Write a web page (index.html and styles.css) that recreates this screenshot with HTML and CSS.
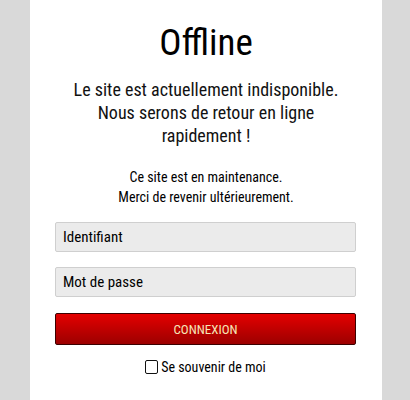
FILE: index.html
```html
<!DOCTYPE html>
<html>
<head>
    <title>Offline</title>
    <link rel="stylesheet" href="styles.css">
</head>
<body>
    <div class="container">
        <h1>Offline</h1>
        <p class="lead">Le site est actuellement indisponible.<br>Nous serons de retour en ligne rapidement !</p>
        <p class="note">Ce site est en maintenance.<br>Merci de revenir ultérieurement.</p>
        <form class="login" autocomplete="off">
            <input type="text" placeholder="Identifiant">
            <input type="password" placeholder="Mot de passe">
            <button type="submit" class="btn">CONNEXION</button>
            <label class="remember"><input type="checkbox">Se souvenir de moi</label>
        </form>
    </div>
</body>
</html>
```

FILE: styles.css
```css
body {
    font-family: Roboto, sans-serif;
    font-stretch: condensed;
    margin: 0;
    padding: 0;
    background: #d9d9d9;
    color: #111;
    text-align: center;
}

.container {
    width: 352px;
    min-height: 400px;
    margin: 0 0 0 30px;
    background: #fff;
    padding: 23px 0 0;
    box-sizing: border-box;
}

h1 {
    margin: 0 0 15px;
    font-size: 37px;
    font-weight: normal;
    line-height: 40px;
    color: #000;
}

.lead {
    margin: 0 0 20px;
    padding: 0 40px;
    font-size: 18px;
    line-height: 23px;
}

.note {
    margin: 0 0 15px;
    font-size: 14px;
    line-height: 20px;
    color: #000;
}

.login {
    display: flex;
    flex-direction: column;
    gap: 15px;
    padding: 0 26px 0 25px;
}

.login input[type=text], .login input[type=password] {
    height: 30px;
    box-sizing: border-box;
    border: 1px solid #cfcfcf;
    border-radius: 2px;
    background: #ebebeb;
    padding: 0 7px;
    font-family: inherit;
    font-stretch: condensed;
    font-size: 15px;
    outline: none;
}

.login input::placeholder {
    color: #000;
}

.btn {
    height: 32px;
    margin-top: 1px;
    border: 1px solid #3c0000;
    border-radius: 2px;
    background: linear-gradient(#e40000, #9c0000);
    color: #f6e6b8;
    font-family: inherit;
    font-stretch: condensed;
    font-size: 13px;
    cursor: pointer;
}

.remember {
    display: flex;
    justify-content: center;
    align-items: center;
    gap: 3px;
    margin-top: -3px;
    font-size: 14px;
    line-height: 20px;
    color: #000;
}

.remember input {
    appearance: none;
    width: 13px;
    height: 14px;
    margin: 0;
    border: 1.5px solid #111;
    border-radius: 2px;
    box-sizing: border-box;
}
```
